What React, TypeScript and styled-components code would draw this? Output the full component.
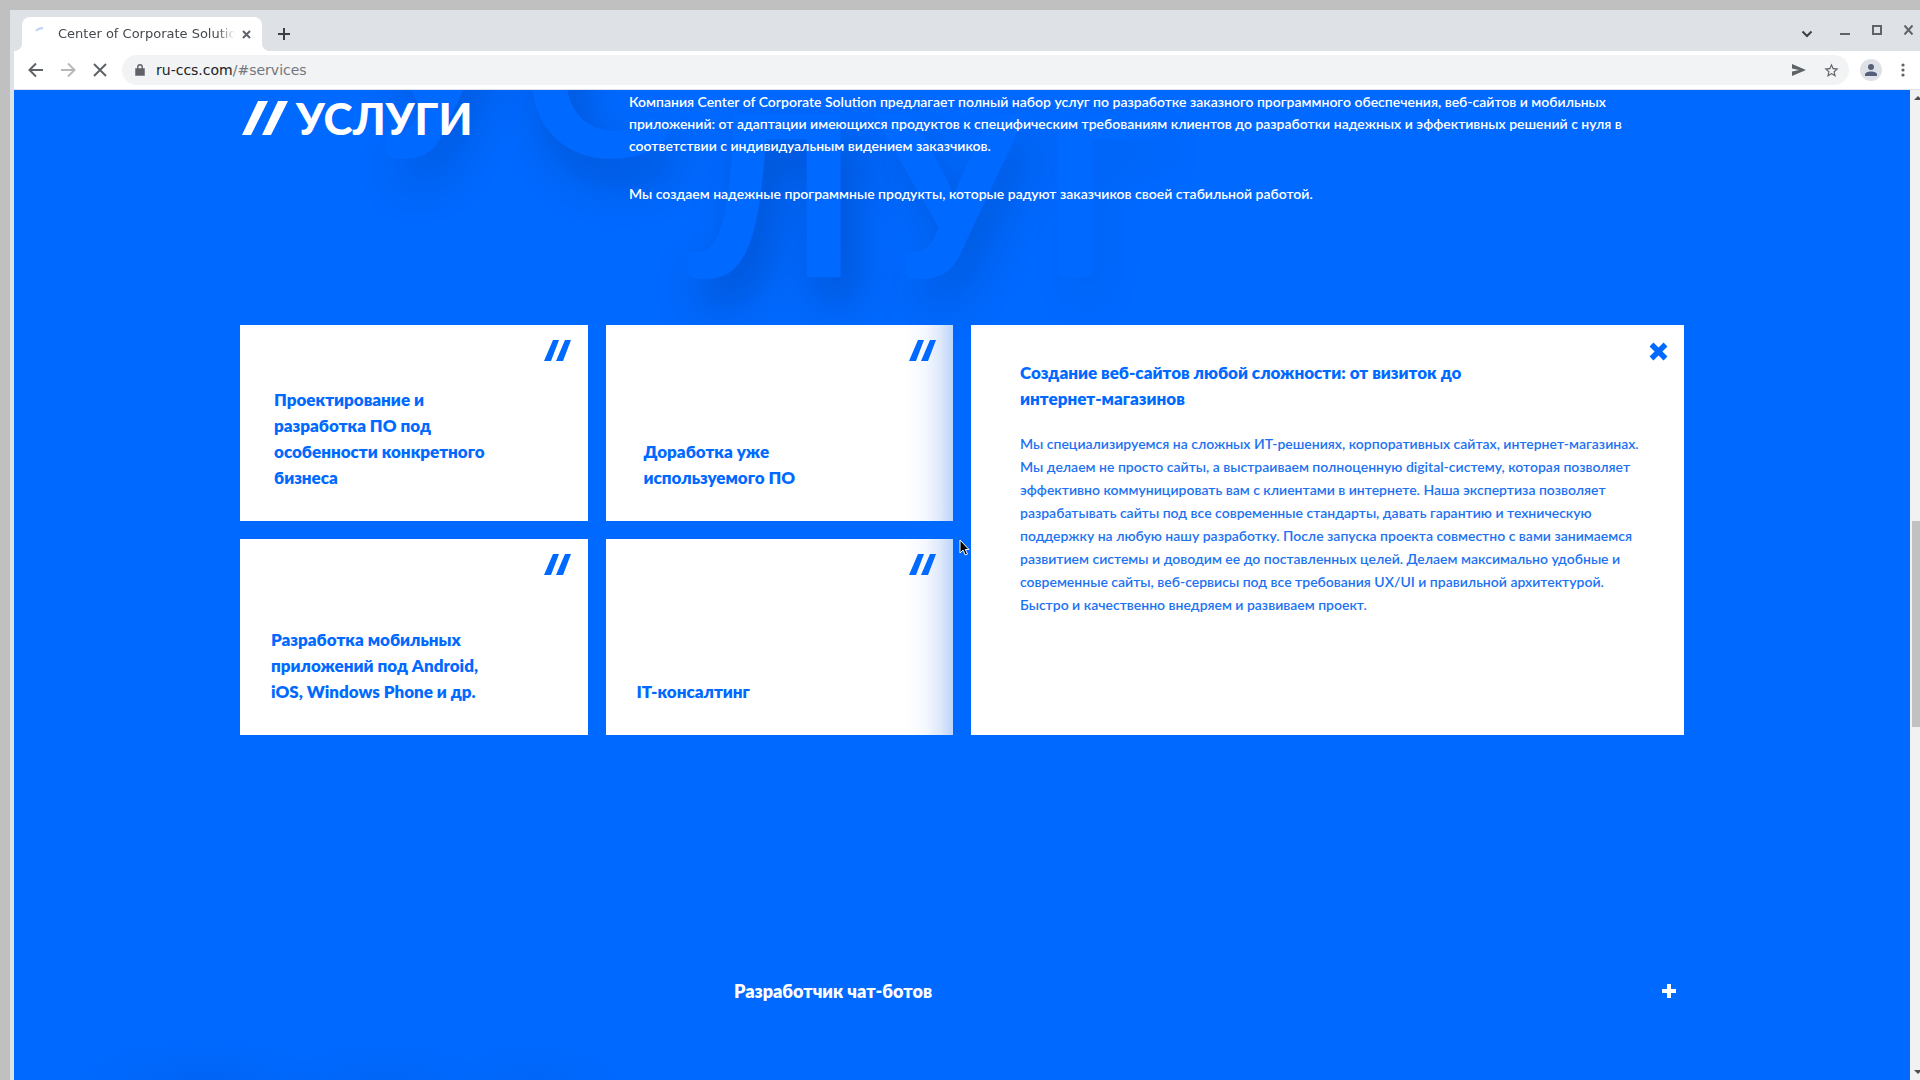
import React from 'react';
import styled, { createGlobalStyle } from 'styled-components';

const blue = '#0069ff';
const chrome = '#dee1e6';
const ink = '#5f6368';

const GlobalStyle = createGlobalStyle`
  * { box-sizing: border-box; }
  body { margin: 0; background: #c0c0c0; }
  h1, h2, p { margin: 0; font-weight: inherit; }
  button {
    margin: 0; padding: 0; border: 0; background: none;
    color: inherit; font: inherit; text-align: left; cursor: pointer;
  }
  svg { display: block; flex: none; }
`;

const Desktop = styled.div`
  display: flex;
  height: 100vh;
  padding: 10px 0 0 10px;
  overflow: hidden;
`;

const Window = styled.div`
  flex: 1;
  min-width: 0;
  display: flex;
  flex-direction: column;
  border-left: 4px solid ${chrome};
  background: #fff;
  font-family: 'DejaVu Sans', sans-serif;
`;

const TabStrip = styled.header`
  flex: none;
  display: flex;
  align-items: flex-end;
  height: 41px;
  background: ${chrome};
`;

const Tab = styled.div`
  position: relative;
  display: flex;
  align-items: center;
  width: 240px;
  height: 34px;
  margin-left: 8px;
  padding: 0 10px 0 13px;
  border-radius: 8px 8px 0 0;
  background: #fff;

  &::before, &::after {
    content: '';
    position: absolute;
    bottom: 0;
    width: 8px;
    height: 8px;
  }
  &::before {
    right: 100%;
    background: radial-gradient(circle at 0 0, transparent 8px, #fff 8px);
  }
  &::after {
    left: 100%;
    background: radial-gradient(circle at 100% 0, transparent 8px, #fff 8px);
  }
`;

const TabTitle = styled.span`
  flex: 1;
  min-width: 0;
  margin: 0 5px 0 11px;
  overflow: hidden;
  white-space: nowrap;
  font-size: 13px;
  line-height: 20px;
  color: #45484c;
  mask-image: linear-gradient(to right, #000 90%, transparent);
`;

const IconButton = styled.button<{ $size?: number; $faded?: boolean }>`
  display: flex;
  align-items: center;
  justify-content: center;
  width: ${p => p.$size ?? 32}px;
  height: ${p => p.$size ?? 32}px;
  flex: none;
  color: ${ink};
  opacity: ${p => (p.$faded ? 0.45 : 1)};
`;

const NewTab = styled(IconButton)`
  margin: 0 auto 1px 6px;
  color: #3c4043;
`;

const WindowControls = styled.div`
  display: flex;
  align-self: flex-start;
  margin: 4px -2px 0 0;
`;

const Toolbar = styled.div`
  flex: none;
  display: flex;
  align-items: center;
  height: 39px;
  padding: 0 1px 0 6px;
  border-bottom: 1px solid ${chrome};
`;

const AddressBar = styled.div`
  flex: 1;
  display: flex;
  align-items: center;
  height: 30px;
  margin: 0 11px 0 6px;
  padding: 0 2px 0 13px;
  border-radius: 15px;
  background: #f1f3f4;
`;

const Url = styled.p`
  flex: 1;
  margin-left: 11px;
  font-size: 14px;
  line-height: 20px;
  color: #73777b;
`;

const Host = styled.span`
  color: #202124;
`;

const Avatar = styled.button`
  display: flex;
  align-items: center;
  justify-content: center;
  width: 22px;
  height: 22px;
  margin-right: 5px;
  border-radius: 50%;
  background: ${chrome};
`;

const Viewport = styled.div`
  flex: 1;
  min-height: 0;
  display: flex;
`;

const Page = styled.main`
  position: relative;
  flex: 1;
  min-width: 0;
  overflow: hidden;
  background:
    radial-gradient(ellipse 130px 40px at 190px 100%, rgba(0, 40, 120, 0.07), transparent),
    radial-gradient(ellipse 110px 36px at 370px 100%, rgba(0, 40, 120, 0.06), transparent),
    radial-gradient(ellipse 90px 36px at 520px 100%, rgba(0, 40, 120, 0.05), transparent),
    ${blue};
  font-family: Lato, 'Noto Sans', sans-serif;
  color: #fff;
`;

const Container = styled.div`
  position: relative;
  max-width: 1444px;
  margin: 0 auto;
`;

const Backdrop = styled.div<{ $left: number; $baseline: number }>`
  position: absolute;
  left: ${p => p.$left}px;
  top: ${p => p.$baseline - 192}px;
  display: flex;
  gap: 18px;
  font-size: 226px;
  font-weight: 900;
  line-height: 226px;
  color: ${blue};
  pointer-events: none;
`;

const Letter = styled.span<{ $shade: number }>`
  text-shadow: 12px 24px 44px rgba(0, 40, 110, ${p => p.$shade});
`;

const Intro = styled.div`
  position: relative;
  display: grid;
  grid-template-columns: 389px 1fr;
  height: 235px;
`;

const Heading = styled.h1`
  display: flex;
  align-items: center;
  gap: 8px;
  height: 44px;
  margin: 6px 0 0 2px;
  font-size: 44px;
  font-weight: 900;
  line-height: 44px;
`;

const Lead = styled.div`
  display: flex;
  flex-direction: column;
  gap: 26px;
  padding-top: 1px;
  font-size: 14px;
  font-weight: 600;
  line-height: 22px;
  white-space: nowrap;
`;

const Services = styled.section`
  position: relative;
  display: grid;
  grid-template-columns: repeat(4, 1fr);
  grid-auto-rows: 196px;
  gap: 18px;
  color: ${blue};
`;

const Card = styled.button<{ $inset: number; $column: number; $shaded?: boolean }>`
  grid-column: ${p => p.$column};
  display: flex;
  flex-direction: column;
  justify-content: space-between;
  padding: 15px 17px 30px ${p => p.$inset}px;
  background: ${p =>
    p.$shaded
      ? 'linear-gradient(to left, #bcd5fb, #dde8fb 12px, #f5f8fe 28px, #fff 48px)'
      : '#fff'};
`;

const CardMark = styled.span`
  align-self: flex-end;
`;

const ServiceName = styled.span<{ $size?: number }>`
  display: block;
  font-size: ${p => p.$size ?? 17}px;
  font-weight: 800;
  line-height: 26px;
  white-space: nowrap;
`;

const Panel = styled.article`
  position: relative;
  grid-column: 3 / span 2;
  grid-row: 1 / span 2;
  padding: 35px 24px 35px 49px;
  background: #fff;
`;

const PanelText = styled.p`
  margin-top: 20px;
  font-size: 14px;
  font-weight: 600;
  line-height: 23px;
  white-space: nowrap;
  color: #1d72f2;
`;

const Close = styled.button`
  position: absolute;
  top: 17px;
  right: 16px;
`;

const Accordion = styled.button`
  display: flex;
  align-items: center;
  justify-content: space-between;
  width: calc(100% - 494px);
  margin: 243px 0 0 494px;
  padding-right: 8px;
`;

const Scrollbar = styled.div`
  flex: none;
  width: 10px;
  padding-left: 2px;
  display: flex;
  flex-direction: column;
  background: #f1f1f1;
`;

const Track = styled.div<{ $share: number }>`
  flex: ${p => p.$share};
`;

const Thumb = styled(Track)`
  background: #c1c1c1;
`;

const ScrollStep = styled.button`
  display: flex;
  align-items: center;
  height: 15px;
  overflow: hidden;
`;

const Pointer = styled.svg`
  position: absolute;
  left: 719px;
  top: 449px;
`;

const Slashes = () => (
  <svg width="27" height="21" viewBox="0 0 27 21" fill="currentColor" aria-hidden="true">
    <path d="M9 0h6L7 21H0zM21 0h6l-8 21h-7z" />
  </svg>
);

const services = [
  { lines: ['Проектирование и', 'разработка ПО под', 'особенности конкретного', 'бизнеса'], inset: 34, column: 1 },
  { lines: ['Доработка уже', 'используемого ПО'], inset: 38, column: 2, shaded: true },
  { lines: ['Разработка мобильных', 'приложений под Android,', 'iOS, Windows Phone и др.'], inset: 31, column: 1 },
  { lines: ['IT-консалтинг'], inset: 31, column: 2, shaded: true },
];

const details = [
  'Мы специализируемся на сложных ИТ-решениях, корпоративных сайтах, интернет-магазинах.',
  'Мы делаем не просто сайты, а выстраиваем полноценную digital-систему, которая позволяет',
  'эффективно коммуницировать вам с клиентами в интернете. Наша экспертиза позволяет',
  'разрабатывать сайты под все современные стандарты, давать гарантию и техническую',
  'поддержку на любую нашу разработку. После запуска проекта совместно с вами занимаемся',
  'развитием системы и доводим ее до поставленных целей. Делаем максимально удобные и',
  'современные сайты, веб-сервисы под все требования UX/UI и правильной архитектурой.',
  'Быстро и качественно внедряем и развиваем проект.',
];

const about = [
  'Компания Center of Corporate Solution предлагает полный набор услуг по разработке заказного программного обеспечения, веб-сайтов и мобильных',
  'приложений: от адаптации имеющихся продуктов к специфическим требованиям клиентов до разработки надежных и эффективных решений с нуля в',
  'соответствии с индивидуальным видением заказчиков.',
];

const Lines = ({ of }: { of: string[] }) => (
  <>
    {of.map((line, i) => (
      <React.Fragment key={line}>
        {i > 0 && <br />}
        {line}
      </React.Fragment>
    ))}
  </>
);

const Cross = ({ size, stroke = 2 }: { size: number; stroke?: number }) => (
  <svg width={size} height={size} viewBox={`0 0 ${size} ${size}`} stroke="currentColor" strokeWidth={stroke}>
    <path d={`M1 1L${size - 1} ${size - 1}M${size - 1} 1L1 ${size - 1}`} />
  </svg>
);

export default function App() {
  return (
    <Desktop>
      <GlobalStyle />
      <Window>
        <TabStrip>
          <Tab>
            <svg width="12" height="16" viewBox="0 0 12 16" fill="none" stroke="#bcd3f4" strokeWidth="2">
              <path d="M1 5C3 2.500 5 2 8 2" />
            </svg>
            <TabTitle>Center of Corporate Solutions</TabTitle>
            <IconButton $size={12} aria-label="Close tab"><Cross size={9} /></IconButton>
          </Tab>
          <NewTab aria-label="New tab">
            <svg width="12" height="12" viewBox="0 0 12 12" stroke="currentColor" strokeWidth="2"><path d="M6 0v12M0 6h12" /></svg>
          </NewTab>
          <WindowControls>
            <IconButton aria-label="Search tabs">
              <svg width="18" height="24" viewBox="0 0 18 24" fill="none" stroke="#3c4043" strokeWidth="2"><path d="M1.500 13.500L6 18l4.500-4.500" /></svg>
            </IconButton>
            <IconButton aria-label="Minimize">
              <svg width="22" height="24" viewBox="0 0 22 24" fill="currentColor"><path d="M9 15h10v2H9z" /></svg>
            </IconButton>
            <IconButton aria-label="Maximize">
              <svg width="20" height="10" viewBox="0 0 20 10" fill="none" stroke="currentColor" strokeWidth="2"><path d="M9 1h8v8H9z" /></svg>
            </IconButton>
            <IconButton aria-label="Close window">
              <svg width="18" height="10" viewBox="0 0 18 10" fill="none" stroke="currentColor" strokeWidth="2"><path d="M7.500 .5l8 9M15.500 .5l-8 9" /></svg>
            </IconButton>
          </WindowControls>
        </TabStrip>
        <Toolbar>
          <IconButton aria-label="Back">
            <svg width="16" height="16" viewBox="0 0 16 16" fill="none" stroke="currentColor" strokeWidth="2"><path d="M15 8H2M8 1.500L1.500 8 8 14.500" /></svg>
          </IconButton>
          <IconButton $faded aria-label="Forward">
            <svg width="16" height="16" viewBox="0 0 16 16" fill="none" stroke="currentColor" strokeWidth="2"><path d="M1 8h13M8 1.500L14.500 8 8 14.500" /></svg>
          </IconButton>
          <IconButton aria-label="Stop"><Cross size={14} /></IconButton>
          <AddressBar>
            <svg width="10" height="12" viewBox="0 0 10 12" fill="none" stroke={ink}>
              <path d="M1 5h8v6H1z" fill={ink} strokeWidth="1.500" />
              <path d="M2.800 5V3a2.200 2.200 0 0 1 4.400 0v2" strokeWidth="1.400" />
            </svg>
            <Url><Host>ru-ccs.com</Host>/#services</Url>
            <IconButton aria-label="Share page">
              <svg width="14" height="12" viewBox="0 0 14 12" fill="currentColor"><path d="M0 0l14 6-14 6V7.500L7 6 0 4.500z" /></svg>
            </IconButton>
            <IconButton aria-label="Bookmark page">
              <svg width="17" height="17" viewBox="0 0 24 24" fill="currentColor"><path d="M22 9.240l-7.190-.62L12 2 9.190 8.630 2 9.240l5.460 4.730L5.820 21 12 17.270 18.180 21l-1.630-7.030L22 9.240zM12 15.400l-3.760 2.270 1-4.280-3.320-2.880 4.380-.38L12 6.100l1.710 4.040 4.380.38-3.320 2.880 1 4.280L12 15.400z" /></svg>
            </IconButton>
          </AddressBar>
          <Avatar aria-label="Profile">
            <svg width="12" height="12" viewBox="0 0 12 12" fill="#55617a"><circle cx="6" cy="3" r="3" /><path d="M0 12V10.500C0 8.500 3 7.500 6 7.500s6 1 6 3V12z" /></svg>
          </Avatar>
          <IconButton aria-label="Menu">
            <svg width="4" height="14" viewBox="0 0 4 14" fill="currentColor"><circle cx="2" cy="2" r="1.600" /><circle cx="2" cy="7" r="1.600" /><circle cx="2" cy="12" r="1.600" /></svg>
          </IconButton>
        </Toolbar>
        <Viewport>
          <Page>
            <Container>
              <Backdrop aria-hidden="true" $left={118} $baseline={59}>
                <Letter $shade={0.24}>У</Letter>
                <Letter $shade={0.32}>С</Letter>
              </Backdrop>
              <Backdrop aria-hidden="true" $left={448} $baseline={179}>
                <Letter $shade={0.36}>Л</Letter>
                <Letter $shade={0.24}>У</Letter>
                <Letter $shade={0.07}>Г</Letter>
              </Backdrop>
              <Intro>
                <Heading>
                  <svg width="46" height="34" viewBox="0 0 46 34" fill="currentColor" aria-hidden="true">
                    <path d="M16 0h10L9 34H0zM36 0h10L29 34h-9z" />
                  </svg>
                  УСЛУГИ
                </Heading>
                <Lead>
                  <p><Lines of={about} /></p>
                  <p>Мы создаем надежные программные продукты, которые радуют заказчиков своей стабильной работой.</p>
                </Lead>
              </Intro>
              <Services>
                {services.map(s => (
                  <Card key={s.lines[0]} $inset={s.inset} $column={s.column} $shaded={s.shaded}>
                    <CardMark><Slashes /></CardMark>
                    <ServiceName><Lines of={s.lines} /></ServiceName>
                  </Card>
                ))}
                <Panel>
                  <h2>
                    <ServiceName><Lines of={['Создание веб-сайтов любой сложности: от визиток до', 'интернет-магазинов']} /></ServiceName>
                  </h2>
                  <PanelText><Lines of={details} /></PanelText>
                  <Close aria-label="Закрыть">
                    <svg width="19" height="19" viewBox="0 0 19 19" stroke="currentColor" strokeWidth="5.500"><path d="M2.500 2.500l14 14M16.500 2.500l-14 14" /></svg>
                  </Close>
                </Panel>
              </Services>
              <Accordion>
                <ServiceName $size={18}>Разработчик чат-ботов</ServiceName>
                <svg width="14" height="14" viewBox="0 0 14 14" stroke="currentColor" strokeWidth="4"><path d="M7 0v14M0 7h14" /></svg>
              </Accordion>
              <Pointer width="12" height="18" viewBox="0 0 12 18" fill="#000" stroke="#fff" aria-hidden="true">
                <path d="M1 1v13l3-3 2.300 5 2.200-1L6.300 10.500H10z" />
              </Pointer>
            </Container>
          </Page>
          <Scrollbar>
            <ScrollStep aria-label="Scroll up">
              <svg width="8" height="4" viewBox="0 0 8 4" fill="#505050"><path d="M2 4l4-4 4 4z" /></svg>
            </ScrollStep>
            <Track $share={416} />
            <Thumb $share={207} />
            <Track $share={338} />
            <ScrollStep aria-label="Scroll down">
              <svg width="8" height="4" viewBox="0 0 8 4" fill="#505050"><path d="M2 0l4 4 4-4z" /></svg>
            </ScrollStep>
          </Scrollbar>
        </Viewport>
      </Window>
    </Desktop>
  );
}
